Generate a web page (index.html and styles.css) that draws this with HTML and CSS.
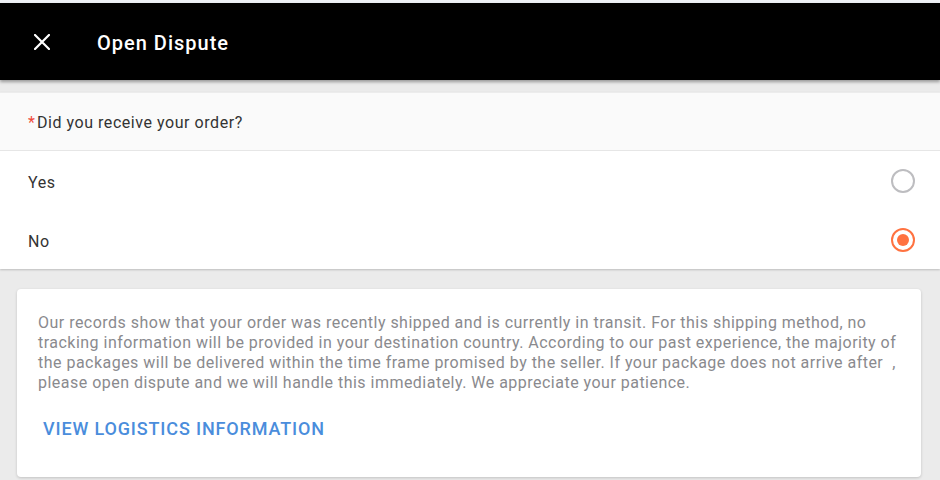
FILE: index.html
```html
<!DOCTYPE html>
<html>
<head>
<meta charset="utf-8">
<link rel="stylesheet" href="styles.css">
</head>
<body>
<div class="topstrip"></div>
<header class="appbar">
  <span class="close">
    <svg width="16" height="16" viewBox="0 0 16 16"><path d="M1 1 L15 15 M15 1 L1 15" stroke="#fff" stroke-width="2.2" stroke-linecap="square"/></svg>
  </span>
  <h1 class="title">Open Dispute</h1>
</header>
<main class="content">
  <section class="form">
    <div class="question"><span class="req">*</span>Did you receive your order?</div>
    <div class="options">
      <label class="option"><span class="opt-label">Yes</span><span class="radio"></span></label>
      <label class="option"><span class="opt-label">No</span><span class="radio checked"></span></label>
    </div>
  </section>
  <section class="card">
    <p class="notice">Our records show that your order was recently shipped and is currently in transit. For this shipping method, no tracking information will be provided in your destination country. According to our past experience, the majority of the packages will be delivered within the time frame promised by the seller. If your package does not arrive after &nbsp;, please open dispute and we will handle this immediately. We appreciate your patience.</p>
    <a class="link" href="#">VIEW LOGISTICS INFORMATION</a>
  </section>
</main>
</body>
</html>
```
FILE: styles.css
```css
html, body {
  margin: 0;
  padding: 0;
}
body {
  background: #ebebeb;
  font-family: Roboto, "Liberation Sans", sans-serif;
  width: 940px;
  height: 480px;
  overflow: hidden;
}
.topstrip {
  height: 3px;
  background: #eef1f6;
}
.appbar {
  height: 77px;
  background: #000;
  display: flex;
  align-items: center;
  box-shadow: 0 2px 3px rgba(0, 0, 0, 0.35);
  position: relative;
  z-index: 2;
}
.close {
  width: 16px;
  height: 16px;
  margin-left: 34px;
  display: flex;
}
.title {
  margin: 2px 0 0 47px;
  color: #fff;
  font-size: 20px;
  font-weight: 500;
  letter-spacing: 1px;
}
.content {
  padding-top: 12px;
  background: #ebebeb;
}
.form {
  background: #fff;
  box-shadow: 0 1px 2px rgba(0, 0, 0, 0.2);
}
.question {
  height: 59px;
  background: #fafafa;
  border-top: 1px solid #ececec;
  border-bottom: 1px solid #e6e6e6;
  box-sizing: border-box;
  display: flex;
  align-items: center;
  padding: 2px 0 0 28px;
  font-size: 16px;
  color: #333;
  letter-spacing: 0.55px;
}
.req {
  color: #f04a3a;
  margin-right: 2px;
  letter-spacing: 0;
}
.option {
  height: 59px;
  display: flex;
  align-items: center;
  justify-content: space-between;
  padding: 0 25px 0 28px;
  font-size: 16px;
  color: #333;
  letter-spacing: 0.55px;
}
.opt-label {
  padding-top: 4px;
}
.radio {
  width: 20px;
  height: 20px;
  border: 2px solid #bdbdc0;
  border-radius: 50%;
  box-sizing: content-box;
  display: flex;
  align-items: center;
  justify-content: center;
}
.radio.checked {
  border-color: #ff7240;
}
.radio.checked::after {
  content: "";
  width: 12px;
  height: 12px;
  border-radius: 50%;
  background: #ff7240;
}
.card {
  margin: 20px 19px 0 17px;
  background: #fff;
  border-radius: 4px;
  box-shadow: 0 1px 3px rgba(0, 0, 0, 0.18);
  padding: 24px 16px 40px 21px;
  height: 188px;
  box-sizing: border-box;
}
.notice {
  margin: 0;
  font-size: 16px;
  line-height: 20px;
  color: #8a8a8e;
  letter-spacing: 0.48px;
}
.link {
  display: inline-block;
  margin: 25px 0 0 5px;
  color: #4a8ddc;
  font-size: 18px;
  font-weight: 500;
  text-decoration: none;
  letter-spacing: 0.85px;
}
```
